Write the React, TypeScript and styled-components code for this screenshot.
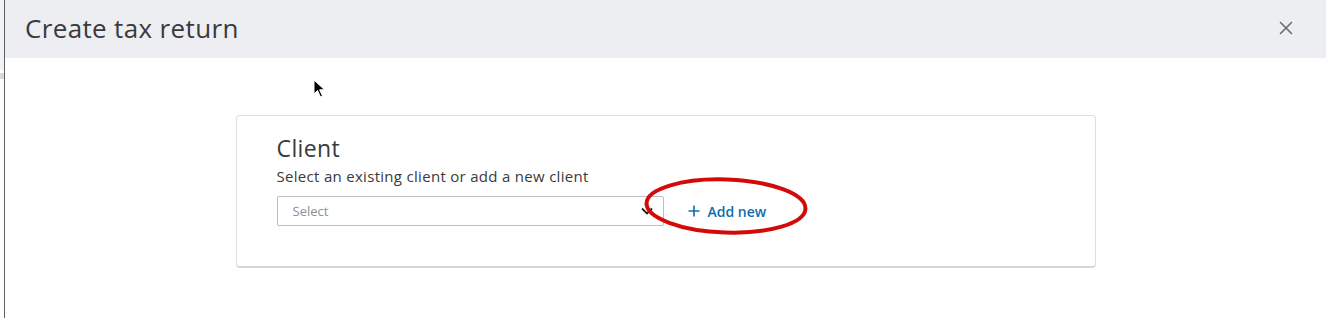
import styled, { createGlobalStyle } from "styled-components";

const GlobalStyle = createGlobalStyle`
  html, body {
    margin: 0;
    padding: 0;
    background: #ffffff;
  }
  body {
    font-family: "Open Sans", Lato, "Liberation Sans", sans-serif;
    color: #393a3d;
  }
`;

export default function App() {
  return (
    <>
      <GlobalStyle />
      <Screen>
        <Gutter>
          <GutterTop />
          <GutterTab />
        </Gutter>
        <Modal>
          <Header>
            <Title>Create tax return</Title>
            <CloseButton aria-label="Close">
              <svg width="14" height="14" viewBox="0 0 14 14">
                <path d="M1.5 1.5 L12.5 12.5 M12.5 1.5 L1.5 12.5" stroke="#6b6c72" strokeWidth="1.6" strokeLinecap="round" />
              </svg>
            </CloseButton>
          </Header>
          <Body>
            <Card>
              <CardTitle>Client</CardTitle>
              <CardHint>Select an existing client or add a new client</CardHint>
              <FieldRow>
                <SelectBox>
                  <Placeholder>Select</Placeholder>
                  <svg width="12" height="8" viewBox="0 0 12 8">
                    <path d="M1 1.5 L6 6.5 L11 1.5" fill="none" stroke="#222" strokeWidth="1.8" />
                  </svg>
                </SelectBox>
                <AddNew>
                  <svg width="12" height="12" viewBox="0 0 12 12">
                    <path d="M6 0.5 V11.5 M0.5 6 H11.5" stroke="#0d6ead" strokeWidth="1.6" />
                  </svg>
                  Add new
                  <Circle width="166" height="60" viewBox="0 0 166 60">
                    <ellipse cx="83" cy="30" rx="79.5" ry="26.5" fill="none" stroke="#d40a0a" strokeWidth="4" transform="rotate(2 83 30)" />
                  </Circle>
                </AddNew>
              </FieldRow>
            </Card>
          </Body>
          <Pointer width="14" height="20" viewBox="0 0 14 20">
            <path d="M1 1 L1 15 L4.5 11.5 L7.5 18 L9.5 17 L6.6 10.8 L11.5 10.8 Z" fill="#000" stroke="#fff" strokeWidth="1" />
          </Pointer>
        </Modal>
      </Screen>
    </>
  );
}

const Screen = styled.div`
  display: flex;
  width: 1326px;
  height: 318px;
  overflow: hidden;
`;

const Gutter = styled.div`
  width: 4px;
  border-right: 1px solid #5f6066;
  display: flex;
  flex-direction: column;
`;

const GutterTop = styled.div`
  height: 70px;
  background: #f2f3f5;
`;

const GutterTab = styled.div`
  margin-top: 3px;
  height: 6px;
  background: #d8d9dc;
`;

const Modal = styled.div`
  position: relative;
  flex: 1;
  background: #ffffff;
`;

const Header = styled.header`
  height: 58px;
  display: flex;
  align-items: center;
  justify-content: space-between;
  padding: 0 33px 0 20px;
  background: #eceef1;
`;

const Title = styled.h1`
  margin: 0 0 3px;
  font-size: 26px;
  letter-spacing: 0.35px;
  font-weight: 400;
  color: #393a3d;
`;

const CloseButton = styled.button`
  display: flex;
  padding: 0;
  border: 0;
  background: none;
  margin-bottom: 3px;
`;

const Body = styled.main`
  padding-top: 57px;
  display: flex;
  justify-content: center;
`;

const Card = styled.section`
  width: 860px;
  box-sizing: border-box;
  padding: 17px 40px 40px;
  border: 1px solid #dcdee2;
  border-bottom: 2px solid #d4d6da;
  border-radius: 4px;
  background: #ffffff;
`;

const CardTitle = styled.h2`
  margin: 0;
  font-size: 23px;
  line-height: 30px;
  letter-spacing: 0.4px;
  font-weight: 400;
  color: #393a3d;
`;

const CardHint = styled.p`
  margin: 3px 0 0;
  font-size: 15px;
  line-height: 20px;
  letter-spacing: 0.3px;
  color: #393a3d;
`;

const FieldRow = styled.div`
  display: flex;
  align-items: center;
  gap: 24px;
  margin-top: 10px;
`;

const SelectBox = styled.div`
  width: 387px;
  height: 30px;
  box-sizing: border-box;
  display: flex;
  align-items: center;
  justify-content: space-between;
  padding: 0 10px 0 15px;
  border: 1px solid #babec5;
  border-radius: 2px;
`;

const Placeholder = styled.span`
  font-size: 13px;
  color: #8d9096;
`;

const AddNew = styled.span`
  position: relative;
  display: flex;
  align-items: center;
  gap: 8px;
  font-size: 14px;
  font-weight: 600;
  color: #0d6ead;
`;

const Circle = styled.svg`
  position: absolute;
  left: -45px;
  top: -26px;
  pointer-events: none;
`;

const Pointer = styled.svg`
  position: absolute;
  left: 308px;
  top: 79px;
`;
